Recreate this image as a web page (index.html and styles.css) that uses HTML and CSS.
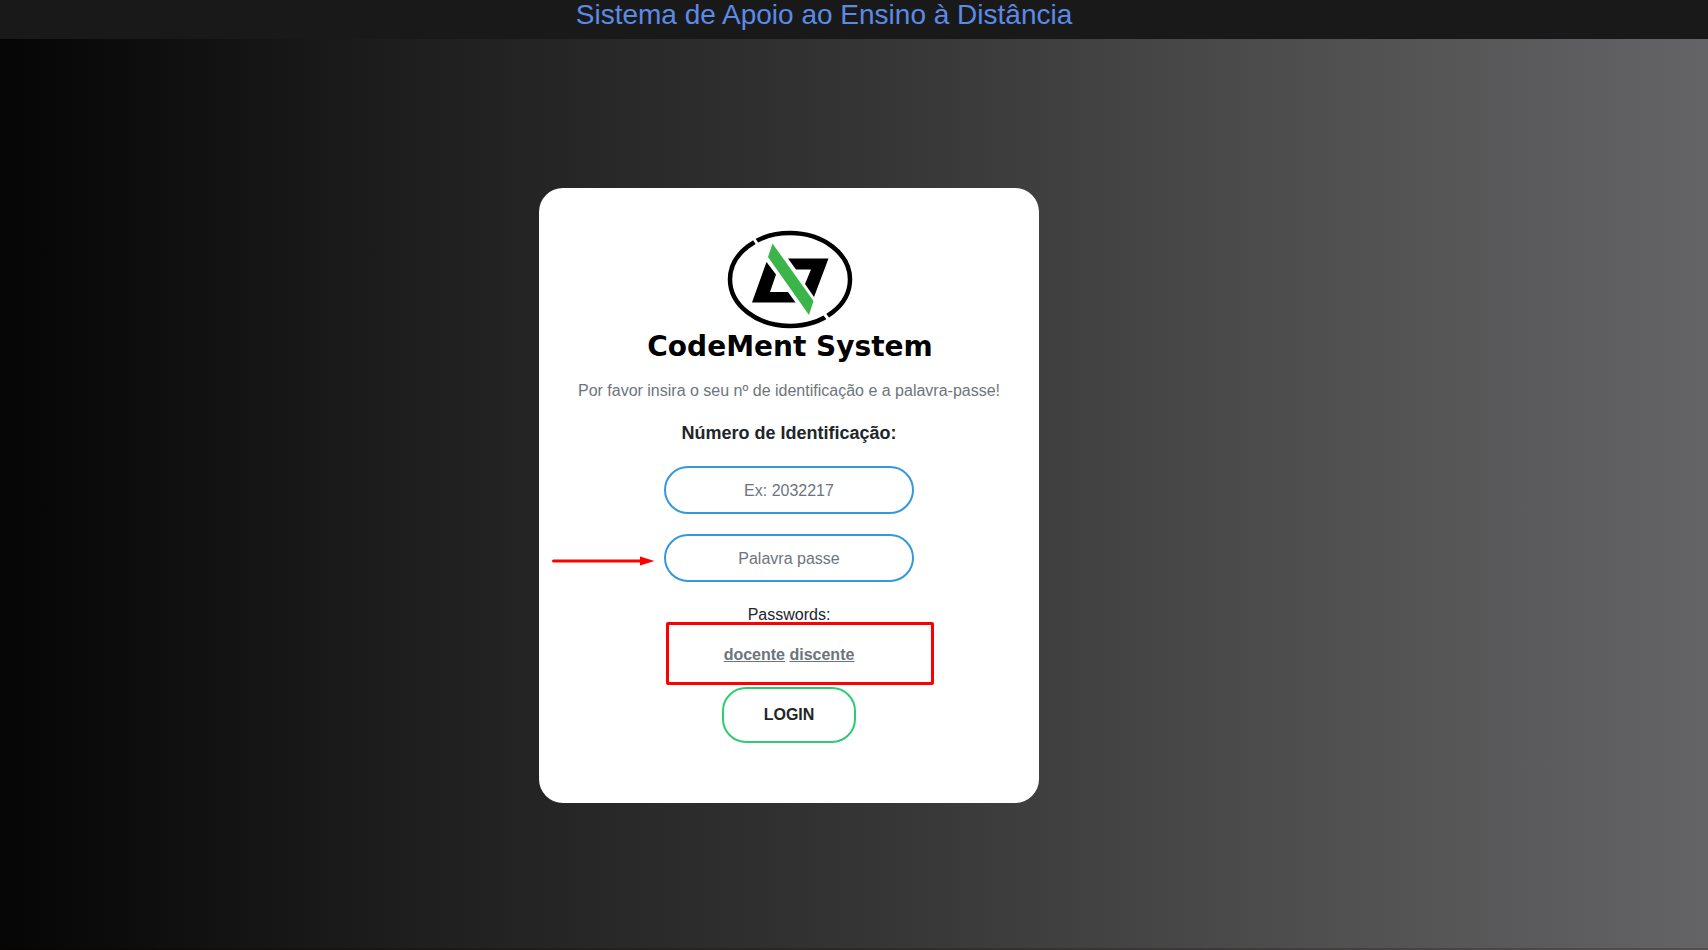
FILE: index.html
```html
<!DOCTYPE html>
<html lang="pt">
<head>
<meta charset="utf-8">
<title>Sistema de Apoio ao Ensino à Distância</title>
<link rel="stylesheet" href="styles.css">
</head>
<body>
<header class="topbar"><h1 class="topbar-title">Sistema de Apoio ao Ensino à Distância</h1></header>
<main class="page">
  <form class="card">
    <svg class="logo" viewBox="-1 0 300 150" role="img" aria-label="CodeMent System">
      <ellipse cx="150" cy="59.500" rx="60" ry="46.500" fill="none" stroke="#000" stroke-width="4.500"/>
      <path d="M112 16L120 28M183 92L191 103" stroke="#fff" stroke-width="3"/>
      <path d="M126.500 42L136 54.500L130 72H148L155.500 82.500H112Z" fill="#000"/>
      <path d="M148 38.500H188.500L174 77L165 64L171 49.500H156Z" fill="#000"/>
      <path d="M132.500 23.500L173.500 81L169 95L128 37Z" fill="#3bb54a"/>
      <text class="logo-text" x="150" y="136" text-anchor="middle">CodeMent System</text>
    </svg>
    <p class="hint">Por favor insira o seu nº de identificação e a palavra-passe!</p>
    <label class="label" for="ident">Número de Identificação:</label>
    <input class="field" id="ident" type="text" placeholder="Ex: 2032217">
    <div class="field-wrap">
      <svg class="arrow" viewBox="0 0 103 10" aria-hidden="true">
        <path d="M1.500 5H90" stroke="#f00" stroke-width="3" stroke-linecap="round"/>
        <path d="M88 .5L102.500 5L88 9.500Z" fill="#f00"/>
      </svg>
      <input class="field field-pass" type="password" placeholder="Palavra passe" aria-label="Palavra passe">
    </div>
    <p class="passwords">Passwords:</p>
    <div class="links">
      <a class="link" href="#">docente</a> <a class="link" href="#">discente</a>
      <span class="highlight"></span>
    </div>
    <button class="login" type="submit">LOGIN</button>
  </form>
</main>
</body>
</html>
```
FILE: styles.css
```css
* { box-sizing: border-box; }
body {
  margin: 0;
  min-height: 100vh;
  display: flex;
  flex-direction: column;
  font: 16px/24px "Liberation Sans", Arial, sans-serif;
  color: #212529;
  background: linear-gradient(to right, #050505, #1e1e1e 24%, #343434 50%, #4f4f50 77%, #646466);
}
.topbar {
  background: #191919;
  padding: 0 60px 9px 0;
  text-align: center;
}
.topbar-title {
  margin: 0;
  font-size: 28px;
  line-height: 30px;
  font-weight: 400;
  color: #5c8ae6;
}
.page {
  flex: 1;
  padding: 149px 130px 0 0;
  border-bottom: 2px solid rgba(20, 0, 0, 0.2);
}
.card {
  max-width: 500px;
  margin: 0 auto;
  padding: 32px 24px 60px;
  border-radius: 24px;
  background: #fff;
  display: flex;
  flex-direction: column;
  align-items: center;
}
.logo { width: 300px; height: 150px; }
.logo-text { font: bold 28px "DejaVu Sans", sans-serif; }
.hint { margin: 9px 0 0; color: #6c757d; }
.label { margin: 18px 0 21px; font-size: 18px; font-weight: 700; }
.field {
  display: block;
  width: 250px;
  height: 48px;
  padding: 2px 10px 0;
  border: 2px solid #3498db;
  border-radius: 24px;
  background: #fff;
  text-align: center;
  font: inherit;
  color: #212529;
}
.field::placeholder { color: #6c757d; opacity: 1; }
.field-wrap { position: relative; margin-top: 20px; }
.arrow { position: absolute; left: -112px; top: 22px; width: 103px; height: 10px; }
.passwords { margin: 21px 0 16px; }
.links { position: relative; }
.link { color: #6c757d; font-weight: 700; }
.highlight {
  position: absolute;
  left: -58px;
  top: -21px;
  width: 268px;
  height: 63px;
  border: 3px solid #f00;
  border-radius: 2px;
  pointer-events: none;
}
.login {
  margin-top: 20px;
  width: 134px;
  height: 56px;
  border: 2px solid #2ecc71;
  border-radius: 24px;
  background: #fff;
  font: inherit;
  font-weight: 700;
  color: #212529;
}
```
